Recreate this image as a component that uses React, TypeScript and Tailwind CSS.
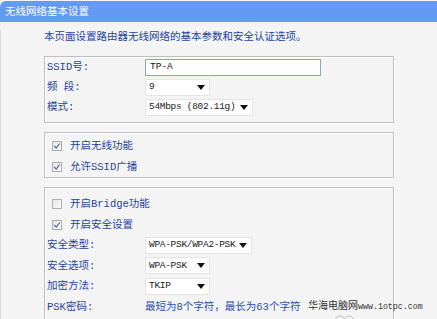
const BLUE = 'text-[#24449c]';

const Arrow = () => (
  <svg width="8" height="5" viewBox="0 0 8 5" className="shrink-0">
    <path d="M0 0H8L4 5Z" fill="#111" />
  </svg>
);

const Select = ({ value, width }: { value: string; width: string }) => (
  <div className={`${width} h-[17px] bg-white border border-[#e4e4e4] flex items-center justify-between pl-[3px] pr-[4px] text-[9.5px] tracking-[-0.3px] text-[#222]`}>
    <span>{value}</span>
    <Arrow />
  </div>
);

const Check = ({ checked }: { checked: boolean }) => (
  <div className="w-[10px] h-[10px] border border-[#adadad] bg-gradient-to-br from-[#e6e6e6] to-[#fafafa] flex items-center justify-center">
    {checked && (
      <svg width="8" height="8" viewBox="0 0 8 8">
        <path d="M1.2 4 L3.2 6 L6.8 1.5" stroke="#5a6a88" strokeWidth="1.2" fill="none" />
      </svg>
    )}
  </div>
);

const Box = ({ className, children }: { className: string; children: React.ReactNode }) => (
  <div className={`w-[350px] border border-[#bebebe] shadow-[1px_1px_0_#fff,inset_1px_1px_0_#fff] ${className}`}>
    {children}
  </div>
);

const Row = ({ label, h, children }: { label: string; h: string; children?: React.ReactNode }) => (
  <div className={`${h} flex items-center pl-[2px]`}>
    <div className={`w-[98px] ${BLUE}`}>{label}</div>
    {children}
  </div>
);

const CheckRow = ({ label, checked, h }: { label: string; checked: boolean; h: string }) => (
  <div className={`${h} flex items-center pl-[7px] gap-[8px] ${BLUE}`}>
    <Check checked={checked} />
    <span>{label}</span>
  </div>
);

export default function App() {
  return (
    <div className="relative w-[437px] h-[319px] overflow-hidden bg-[#f4f4f4] font-['Liberation_Mono','Noto_Sans_CJK_SC',monospace] text-[10.5px] leading-[14px]">
      <div className="mt-[1px] h-[21px] bg-[#6499f4] rounded-tl-[6px] text-white pl-[5px] flex items-center">
        无线网络基本设置
      </div>
      <div className="border-l border-[#dadada] h-full pl-[43px]">
        <div className={`mt-[8px] ${BLUE}`}>本页面设置路由器无线网络的基本参数和安全认证选项。</div>

        <Box className="mt-[12px] pb-[5px]">
          <Row label="SSID号:" h="h-[20px]">
            <div className="w-[176px] h-[17px] bg-white border border-[#8ea2c6] flex items-center pl-[4px] text-[9.5px] text-[#111]">TP-A</div>
          </Row>
          <Row label="频 段:" h="h-[20px]">
            <Select value="9" width="w-[65px]" />
          </Row>
          <Row label="模式:" h="h-[20px]">
            <Select value="54Mbps (802.11g)" width="w-[108px]" />
          </Row>
        </Box>

        <Box className="mt-[9px] pt-[2px]">
          <CheckRow label="开启无线功能" checked h="h-[21px]" />
          <CheckRow label="允许SSID广播" checked h="h-[21px]" />
        </Box>

        <Box className="mt-[9px] pt-[5px] pb-[10px]">
          <CheckRow label="开启Bridge功能" checked={false} h="h-[21px]" />
          <CheckRow label="开启安全设置" checked h="h-[21px]" />
          <Row label="安全类型:" h="h-[20px]">
            <Select value="WPA-PSK/WPA2-PSK" width="w-[107px]" />
          </Row>
          <Row label="安全选项:" h="h-[21px]">
            <Select value="WPA-PSK" width="w-[65px]" />
          </Row>
          <Row label="加密方法:" h="h-[20px]">
            <Select value="TKIP" width="w-[65px]" />
          </Row>
          <Row label="PSK密码:" h="h-[21px]">
            <span className="text-[#2a50aa]">最短为8个字符，最长为63个字符</span>
          </Row>
        </Box>
      </div>

      <div className="absolute left-[308px] top-[300px] text-[#333] text-[10px] leading-[14px]">
        华海电脑网<span className="text-[8.3px]">www.1otpc.com</span>
      </div>
      <svg className="absolute left-[333px] top-[314px]" width="24" height="6" viewBox="0 0 24 6">
        <circle cx="7" cy="7" r="5" stroke="#bbb" fill="none" />
        <circle cx="16" cy="7" r="5" stroke="#bbb" fill="none" />
      </svg>
    </div>
  );
}
